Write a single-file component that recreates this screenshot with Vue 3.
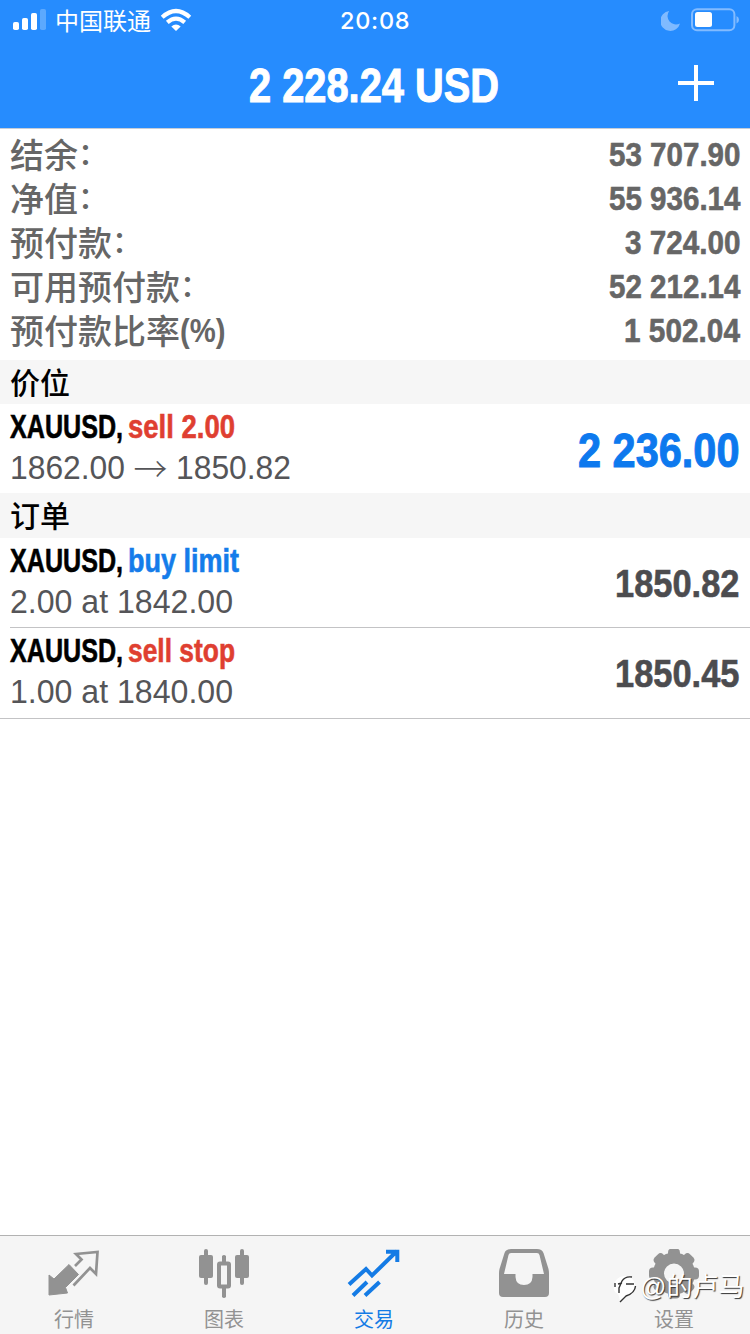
<script setup>
import { h } from 'vue'

// A line of condensed text set to an exact advance width.
const Fit = (p) =>
  h('svg', { class: 'fit', width: p.w, height: p.size, style: { fontSize: p.size + 'px' } }, [
    h('text', { x: 0, y: p.size * 0.86, textLength: p.w, lengthAdjust: 'spacingAndGlyphs', fill: 'currentColor' }, p.text),
  ])
Fit.props = ['text', 'w', 'size']

const summary = [
  { label: '结余', value: '53 707.90', w: 131.5 },
  { label: '净值', value: '55 936.14', w: 131.5 },
  { label: '预付款', value: '3 724.00', w: 115.5 },
  { label: '可用预付款', value: '52 212.14', w: 131.5 },
  { label: '预付款比率', suffix: '(%)', value: '1 502.04', w: 116 },
]
const orders = [
  { kind: 'buy limit', kw: 111, tone: 'blue', detail: '2.00 at 1842.00', price: '1850.82' },
  { kind: 'sell stop', kw: 107, tone: 'red', detail: '1.00 at 1840.00', price: '1850.45' },
]
const tooth = [0, 45, 90, 135, 180, 225, 270, 315]
</script>

<template>
  <div class="screen">
    <header>
      <div class="status">
        <svg class="signal" width="36" height="24" viewBox="0 0 36 24" fill="#fff">
          <rect x="1" y="14" width="6" height="8" rx="1.8" />
          <rect x="10" y="10" width="6" height="12" rx="1.8" />
          <rect x="19" y="5" width="6" height="17" rx="1.8" />
          <rect x="28" y="1" width="6" height="21" rx="1.8" opacity=".25" />
        </svg>
        <span class="carrier">中国联通</span>
        <svg class="wifi" width="32" height="24" viewBox="0 0 32 24" fill="none" stroke="#fff" stroke-width="4.2">
          <path d="M2.2 9.2Q16-3.2 29.8 9.2M7.3 14.4Q16 6.8 24.7 14.4" />
          <path d="M11.3 18.6Q16 14.6 20.7 18.6L16 23z" fill="#fff" stroke="none" />
        </svg>
        <span class="grow"></span>
        <svg width="20" height="22" viewBox="0 0 20 22" fill="#7fbaff">
          <path d="M8.2 2A10 10 0 1 0 19 14.4A8.400 8.400 0 0 1 8.200 2z" />
        </svg>
        <svg class="battery" width="50" height="24" viewBox="0 0 50 24">
          <rect x="2" y="1.2" width="42.4" height="21" rx="5" fill="none" stroke="#82bbff" stroke-width="2" />
          <rect x="5" y="4" width="17" height="15" rx="2.5" fill="#fff" />
          <path d="M46.500 8Q49 9 49 11.7T46.500 15.5z" fill="#82bbff" />
        </svg>
        <span class="clock">20:08</span>
      </div>
      <div class="title">
        <Fit text="2 228.24 USD" :w="250" :size="48" />
        <svg class="plus" width="36" height="36" viewBox="0 0 36 36" stroke="#fff" stroke-width="4">
          <path d="M0 18H36M18 0V36" />
        </svg>
      </div>
    </header>

    <section class="summary">
      <div v-for="s in summary" :key="s.label" class="line">
        <span class="label">{{ s.label }}</span>
        <Fit v-if="s.suffix" class="suffix" :text="s.suffix" :w="45.5" :size="33" />
        <span v-else class="colon">：</span>
        <span class="grow"></span>
        <Fit :text="s.value" :w="s.w" :size="34" />
      </div>
    </section>

    <h2>价位</h2>
    <section class="row position">
      <div class="info">
        <div class="name">
          <Fit text="XAUUSD," :w="113" :size="33" />
          <Fit class="red" text="sell 2.00" :w="107" :size="33" />
        </div>
        <div class="detail">
          <Fit text="1862.00" :w="115" :size="32.5" />
          <span class="arrow">→</span>
          <Fit text="1850.82" :w="115" :size="32.5" />
        </div>
      </div>
      <Fit class="profit" text="2 236.00" :w="161.5" :size="48" />
    </section>

    <h2 class="orders">订单</h2>
    <section v-for="o in orders" :key="o.kind" class="row order">
      <div class="info">
        <div class="name">
          <Fit text="XAUUSD," :w="113" :size="33" />
          <Fit :class="o.tone" :text="o.kind" :w="o.kw" :size="33" />
        </div>
        <div class="detail"><Fit :text="o.detail" :w="223" :size="32.5" /></div>
      </div>
      <Fit class="price" :text="o.price" :w="124.5" :size="39.5" />
    </section>

    <main></main>

    <nav>
      <div class="tab">
        <svg width="54" height="52" viewBox="0 0 54 52">
          <path d="M22 15.5L31.5 25.5L18.500 38.5L20.500 44L2 46V26L7 30Z" fill="#929292" stroke="#929292" stroke-linejoin="round" />
          <path d="M28 17L34.5 10.5L29 5L50.500 3L49 25L43 19L26.5 36.5" fill="none" stroke="#929292" stroke-width="2.7" />
        </svg>
        <span>行情</span>
      </div>
      <div class="tab">
        <svg width="54" height="52" viewBox="0 0 54 52" fill="#929292">
          <rect x="2" y="6" width="14" height="23" rx="2" /><rect x="7" y="0" width="4" height="36" rx="2" />
          <rect x="38" y="6" width="14" height="23" rx="2" /><rect x="43" y="0" width="4" height="36" rx="2" />
          <path d="M25 7q2-2 4 0v6H25zM25 37h4v11q-2 2-4 0z" />
          <rect x="22" y="14.5" width="10" height="23" rx="1" fill="none" stroke="#929292" stroke-width="4" />
        </svg>
        <span>图表</span>
      </div>
      <div class="tab active">
        <svg width="54" height="52" viewBox="0 0 54 52" fill="none" stroke="#147be5" stroke-width="4">
          <path d="M2 35.5L19 20L25 26.5L50 2M39 2.8H50.3V13" />
          <path d="M6 46.5L20 33M18 46.5L32.5 33" />
        </svg>
        <span>交易</span>
      </div>
      <div class="tab">
        <svg width="54" height="52" viewBox="0 0 54 52">
          <path fill="#929292" fill-rule="evenodd" d="M14 0H40Q45 0 46.500 4L51.500 20Q52 22 52 25V44Q52 48 48 48H6Q2 48 2 44V25Q2 22 2.500 20L7.500 4Q9 0 14 0zM14 4Q12 4 11.500 6L7 25H18.500V28Q19 36 27 36T35.500 28V25H47L42.500 6Q42 4 40 4z" />
        </svg>
        <span>历史</span>
      </div>
      <div class="tab">
        <svg width="54" height="52" viewBox="0 0 54 52" fill="#929292">
          <g transform="translate(27 24.500)">
            <rect v-for="a in tooth" :key="a" x="-6" y="-25" width="12" height="12" rx="4" :transform="`rotate(${a})`" />
            <path fill-rule="evenodd" d="M0-21A21 21 0 1 1 0 21A21 21 0 1 1 0-21zM0-10A10 10 0 1 0 0 10A10 10 0 1 0 0-10z" />
          </g>
        </svg>
        <span>设置</span>
      </div>
    </nav>

    <div class="watermark">
      <svg width="27" height="32" viewBox="0 0 27 32">
        <path d="M1 15Q2 6 11 5Q21 5 22 14Q22 23 13 24L7 30Q6 25 5 23Q0 21 1 15z" fill="#fff" />
        <path d="M2 12V16M19 6Q12 5 9 10L6 17V22M5 13L9 12M13 13H21M22.500 15Q22 22 13 25L7 31" fill="none" stroke="#333" stroke-width="1.400" />
      </svg>
      <span>@的卢马</span>
    </div>
  </div>
</template>

<style>
body { margin: 0; background: #fff; }
</style>

<style scoped>
.screen {
  position: relative;
  width: 750px;
  height: 1334px;
  display: flex;
  flex-direction: column;
  overflow: hidden;
  background: #fff;
  font-family: "Liberation Sans", "Noto Sans CJK SC", sans-serif;
}
svg { display: block; flex: none; }
.fit { overflow: visible; font-weight: 700; stroke: currentColor; stroke-width: 0.6px; }
.grow { flex: 1; }
header { height: 129px; flex: none; background: #268cfe; color: #fff; border-bottom: 1px solid #c5cdd8; box-sizing: border-box; }
.status { position: relative; display: flex; align-items: center; height: 40px; padding: 0 10px 0 12px; }
.carrier { font: 24px/40px "Noto Sans CJK SC", sans-serif; margin: 0 9px 0 7px; height: 40px; }
.battery { margin-left: 9px; }
.clock { position: absolute; left: 340px; top: 1px; font: 500 23.5px/40px Inter, sans-serif; letter-spacing: 0.7px; }
.title { position: relative; display: flex; justify-content: center; padding: 20.500px 3px 0 0; }
.title .fit, .profit { stroke-width: 1px; }
.plus { position: absolute; right: 36px; top: 25px; }
.summary { flex: none; height: 228px; padding-top: 3px; color: #666; }
.line { display: flex; align-items: center; height: 44px; padding: 0 10px; }
.label { font: 500 34px/44px "Noto Sans CJK SC", sans-serif; }
.label { padding-bottom: 1px; }
.suffix { stroke-width: 0; }
.colon { font: 500 30px/34px "Noto Sans CJK SC", sans-serif; padding-bottom: 7px; }
h2 { margin: 0; flex: none; height: 44px; padding-left: 10px; background: #f6f6f6; color: #000; font: 500 30px/42px "Noto Sans CJK SC", sans-serif; }
h2.orders { height: 45px; }
.row { flex: none; display: flex; justify-content: space-between; align-items: center; box-sizing: border-box; padding-right: 11px; margin-left: 10px; height: 90px; }
.position { height: 89px; }
.position .profit { margin-top: 2px; }
.order { border-bottom: 1px solid #c3c3c5; }
.order:nth-last-of-type(1) { margin-left: 0; padding-left: 10px; height: 91px; }
.info { align-self: flex-start; padding-top: 5.5px; }
.name { display: flex; gap: 5px; }
.detail { display: flex; align-items: center; margin-top: 9px; height: 32px; color: #555558; }
.detail .fit { font-weight: 400; stroke: none; }
.arrow { width: 51px; text-align: center; font: 300 34px/32px "Noto Sans CJK SC", sans-serif; }
.red { color: #df3f31; }
.blue { color: #147cea; }
.profit { color: #0d79ee; }
.price { color: #4c4c4f; }
main { flex: 1; }
nav { height: 99px; flex: none; box-sizing: border-box; display: grid; grid-template-columns: repeat(5, 1fr); border-top: 1px solid #b2b2b2; background: #f5f5f5; }
.tab { display: flex; flex-direction: column; align-items: center; padding: 13px 2px 0 0; color: #929292; font: 20px/28px "Noto Sans CJK SC", sans-serif; }
.tab span { margin-top: 4px; }
.active { color: #147be5; }
.watermark { position: absolute; left: 613px; top: 1269px; display: flex; align-items: center; color: #fff; font: 26px/36px "Liberation Sans", "Noto Sans CJK SC", sans-serif; text-shadow: 1px 1px 1px #333; white-space: nowrap; }
</style>
